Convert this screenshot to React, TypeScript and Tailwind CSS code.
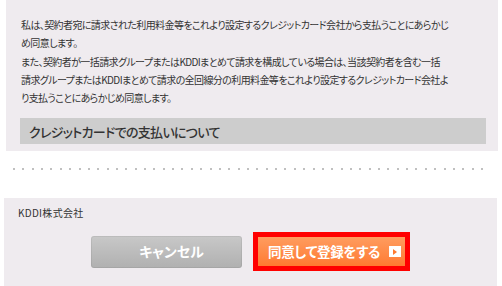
import React from 'react';

const bodyLines = [
  '私は、契約者宛に請求された利用料金等をこれより設定するクレジットカード会社から支払うことにあらかじ',
  'め同意します。',
  'また、契約者が一括請求グループまたはKDDIまとめて請求を構成している場合は、当該契約者を含む一括',
  '請求グループまたはKDDIまとめて請求の全回線分の利用料金等をこれより設定するクレジットカード会社よ',
  'り支払うことにあらかじめ同意します。',
];

const font = "font-['Noto_Sans_CJK_JP',sans-serif] [font-feature-settings:'palt']";

function DottedRule() {
  return (
    <div className="flex justify-between pl-[13px] pr-[19px]">
      {Array.from({ length: 51 }).map((_, i) => (
        <span key={i} className="block w-[2px] h-[2px] bg-[#c0c0c0]" />
      ))}
    </div>
  );
}

export default function App() {
  return (
    <div className={`w-[502px] h-[286px] bg-white overflow-hidden text-[#333] ${font}`}>
      {/* Agreement text */}
      <div className="ml-[6px] w-[492px] h-[151px] bg-[#efebef] pt-[16px]">
        <div className="pl-[15px] text-[10px] leading-[18.3px] tracking-[-0.6px]">
          {bodyLines.map((line) => (
            <p key={line} className="whitespace-nowrap">{line}</p>
          ))}
        </div>
        <div className="mt-[11px] ml-[14px] mr-[12px] h-[26px] bg-[#cdcdcd] flex items-center pl-[9px] text-[13px] tracking-[-0.7px] font-medium">
          クレジットカードでの支払いについて
        </div>
      </div>

      {/* Separator */}
      <div className="h-[47px] pt-[17px]">
        <DottedRule />
      </div>

      {/* Footer */}
      <div className="ml-[4px] w-[493px] h-[88px] bg-[#efebef] pt-[7px]">
        <p className="pl-[14px] text-[10px] leading-[16px] tracking-[0.3px]">KDDI株式会社</p>
        <div className="mt-[11px] flex items-center justify-center gap-[11px]">
          <button className="w-[151px] h-[32px] rounded-[3px] bg-gradient-to-b from-[#c8c8c8] to-[#b0b0b0] shadow-[inset_0_0_0_1px_rgba(0,0,0,0.06)] text-white text-[14px] font-bold pl-[10px]">
            キャンセル
          </button>
          <div className="border-[5px] border-[#ff0000]">
            <button className="w-[147px] h-[29px] bg-gradient-to-b from-[#ff9c5e] to-[#ff7a30] text-white text-[13.5px] tracking-[-0.3px] font-bold flex items-center pl-[10px]">
              <span className="whitespace-nowrap">同意して登録をする</span>
              <span className="ml-[9px] w-[12px] h-[11px] bg-white flex items-center justify-center">
                <svg width="4" height="6" viewBox="0 0 4 6">
                  <path d="M0 0 L4 3 L0 6 Z" fill="#ff7a30" />
                </svg>
              </span>
            </button>
          </div>
        </div>
      </div>
    </div>
  );
}
